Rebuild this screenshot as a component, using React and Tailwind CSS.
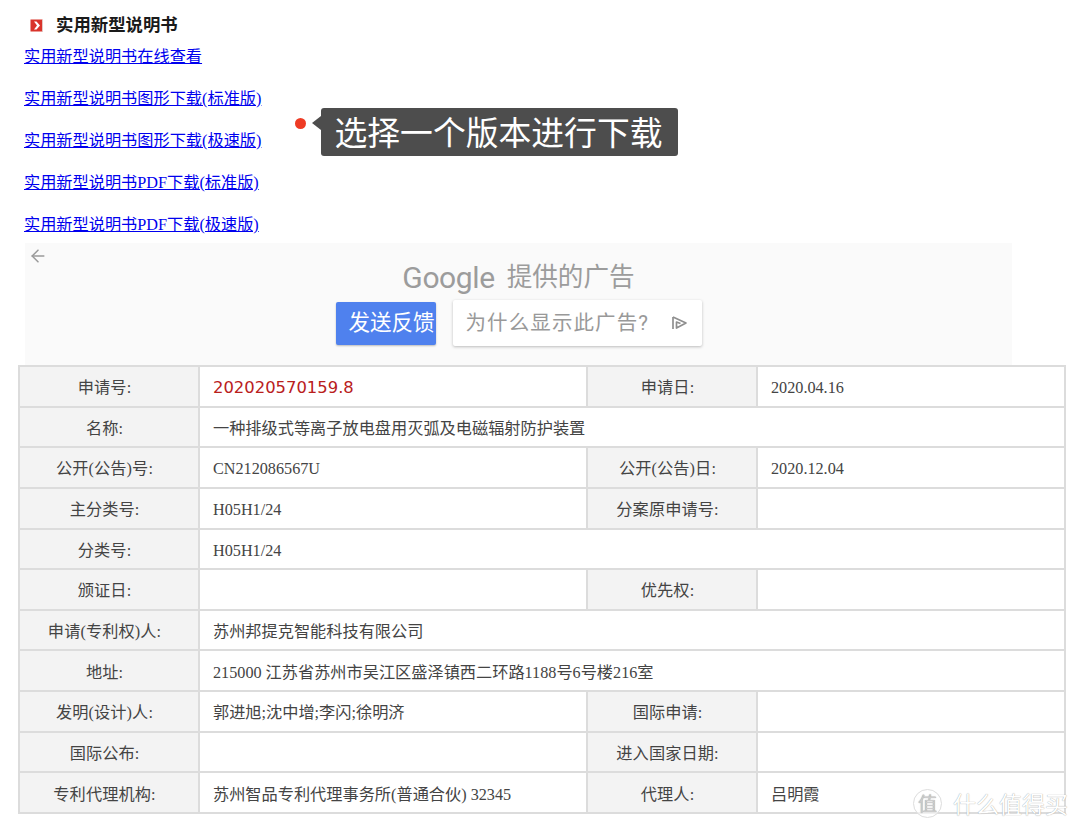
import React from 'react';
import { ArrowLeft } from 'lucide-react';

const SERIF = 'font-["Liberation_Serif","Noto_Sans_CJK_SC",serif]';

const links = [
  '实用新型说明书在线查看',
  '实用新型说明书图形下载(标准版)',
  '实用新型说明书图形下载(极速版)',
  '实用新型说明书PDF下载(标准版)',
  '实用新型说明书PDF下载(极速版)',
];

// [左标签, 左值, 右标签, 右值] 没有右边两项的行占满整行
const rows = [
  ['申请号:', '202020570159.8', '申请日:', '2020.04.16'],
  ['名称:', '一种排级式等离子放电盘用灭弧及电磁辐射防护装置'],
  ['公开(公告)号:', 'CN212086567U', '公开(公告)日:', '2020.12.04'],
  ['主分类号:', 'H05H1/24', '分案原申请号:', ''],
  ['分类号:', 'H05H1/24'],
  ['颁证日:', '', '优先权:', ''],
  ['申请(专利权)人:', '苏州邦提克智能科技有限公司'],
  ['地址:', '215000 江苏省苏州市吴江区盛泽镇西二环路1188号6号楼216室'],
  ['发明(设计)人:', '郭进旭;沈中增;李闪;徐明济', '国际申请:', ''],
  ['国际公布:', '', '进入国家日期:', ''],
  ['专利代理机构:', '苏州智品专利代理事务所(普通合伙) 32345', '代理人:', '吕明霞'],
];

function Label({ children }) {
  return (
    <td className="border-2 border-[#dcdcdc] bg-[#f3f3f3] pr-[9px] pt-[4px] text-center tracking-[0.1px]">
      {children}
    </td>
  );
}

function Value({ children, span, red }) {
  return (
    <td
      colSpan={span}
      className={`border-2 border-[#dcdcdc] bg-white pl-[13px] pt-[4px] ${
        red ? 'font-["DejaVu_Sans",sans-serif] text-[16.4px] text-[#b9201c]' : ''
      }`}
    >
      {children}
    </td>
  );
}

function AdChoices() {
  return (
    <svg width="18" height="18" viewBox="0 0 18 18" fill="none" stroke="#8f8f8f" strokeWidth="1.7">
      <path d="M3 3v12" />
      <path d="M3 3 16 9 6.5 14V8l4 1.5" strokeLinejoin="round" />
    </svg>
  );
}

export default function App() {
  return (
    <div className={`relative h-[829px] w-[1080px] overflow-hidden bg-white ${SERIF}`}>
      {/* 标题 */}
      <div className="flex h-[46px] items-center pl-[30px] pt-[4px]">
        <svg width="13" height="13" viewBox="0 0 13 13" className="shrink-0">
          <rect x="0.5" y="0.5" width="12" height="12" fill="#d9342b" />
          <rect x="12" y="1" width="1" height="12" fill="#e3c9c6" />
          <path d="M4 2.5h2.5L10 6.5 6.5 10.5H4L7 6.5z" fill="#fff" />
        </svg>
        <span className="ml-[13px] text-[17.4px] font-bold text-[#1a1a1a]">实用新型说明书</span>
      </div>

      {/* 下载链接 */}
      <div className="flex flex-col gap-[20px] pl-[24px]">
        {links.map((text) => (
          <a key={text} href="#" className="h-[22px] w-fit text-[16.2px] leading-[22px] text-[#0000ee] underline">
            {text}
          </a>
        ))}
      </div>

      {/* 广告 */}
      <div className='relative ml-[25px] mt-[7px] flex h-[122px] w-[987px] flex-col items-center bg-[#fafafa] pt-[17px] font-["Roboto","Noto_Sans_CJK_SC",sans-serif]'>
        <ArrowLeft className="absolute left-[3px] top-[3px] h-[20px] w-[20px] text-[#9a9a9a]" strokeWidth={1.8} />
        <div className="flex h-[34px] items-center text-[#9c9c9c]">
          <span className="text-[30px] tracking-[-0.4px]">Google</span>
          <span className="ml-[12px] text-[25.6px]">提供的广告</span>
        </div>
        <div className="mt-[6px] flex items-center gap-[17px]">
          <div className="flex h-[43px] w-[100px] items-center rounded-[2px] bg-[#4f81ee] pl-[13px] text-[21.5px] text-white shadow-[0_1px_2px_#bbb]">
            发送反馈
          </div>
          <div className="flex h-[46px] w-[249px] items-center justify-between rounded-[2px] bg-white pl-[13px] pr-[14px] text-[20.5px] text-[#999] shadow-[0_1px_3px_#bbb]">
            <span className="tracking-[1.1px]">为什么显示此广告?</span>
            <AdChoices />
          </div>
        </div>
      </div>

      {/* 著录项目 */}
      <table className="ml-[18px] w-[1046px] table-fixed border-collapse text-[16.2px] text-[#444]">
        <colgroup>
          <col className="w-[180px]" />
          <col className="w-[388px]" />
          <col className="w-[170px]" />
          <col className="w-[308px]" />
        </colgroup>
        <tbody>
          {rows.map(([label, value, label2, value2], i) => (
            <tr key={label} className="h-[40.65px]">
              <Label>{label}</Label>
              {label2 ? (
                <>
                  <Value red={i === 0}>{value}</Value>
                  <Label>{label2}</Label>
                  <Value>{value2}</Value>
                </>
              ) : (
                <Value span={3}>{value}</Value>
              )}
            </tr>
          ))}
        </tbody>
      </table>

      {/* 选择版本的提示 */}
      <div className="absolute left-[295px] top-[108px] flex items-center">
        <span className="h-[11px] w-[11px] -translate-y-[9px] rounded-full bg-[#ee3b24]" />
        <span className="ml-[6px] h-0 w-0 -translate-y-[9px] border-y-[7px] border-r-[9px] border-y-transparent border-r-[#4d4d4d]" />
        <div className='flex h-[48px] w-[357px] items-center justify-center rounded-[3px] bg-[#4d4d4d] pb-[2px] pr-[2px] font-["Noto_Sans_CJK_SC",sans-serif] text-[32.8px] text-white'>
          选择一个版本进行下载
        </div>
      </div>

      {/* 水印 */}
      <div className='absolute left-[913px] top-[789px] flex items-center font-["Noto_Sans_CJK_SC",sans-serif] text-white [text-shadow:0_0_1px_#888]'>
        <span className="flex h-[29px] w-[29px] items-center justify-center rounded-full border border-[#ddd] bg-white/60 text-[19px] text-[#ccc]">
          值
        </span>
        <span className="ml-[11px] text-[23px] leading-none">什么值得买</span>
      </div>
    </div>
  );
}
